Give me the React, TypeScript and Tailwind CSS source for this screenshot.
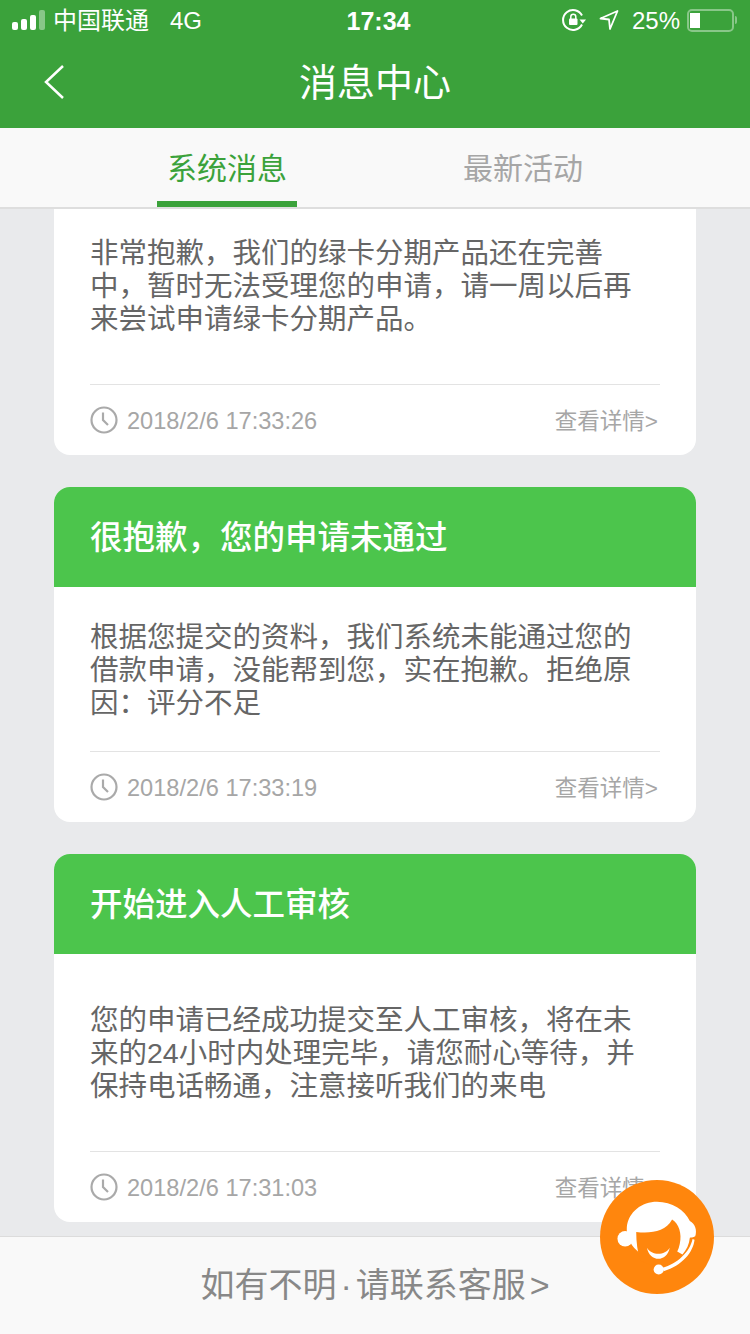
// App.tsx
function SignalBars() {
  return (
    <div className="flex items-end gap-[3px]">
      <span className="h-[8px] w-[6px] rounded-[2px] bg-white" />
      <span className="h-[11px] w-[6px] rounded-[2px] bg-white" />
      <span className="h-[15px] w-[6px] rounded-[2px] bg-white" />
      <span className="h-[20px] w-[6px] rounded-[2px] bg-white/40" />
    </div>
  );
}

function StatusBar() {
  return (
    <div className="flex h-[40px] items-center pl-[12px] pr-[13px] text-white">
      <SignalBars />
      <span className="ml-[8px] mt-[2px] text-[24px] leading-none">中国联通</span>
      <span className="ml-[21px] mt-[2px] text-[24px] leading-none">4G</span>
      <span className="absolute left-0 right-0 mt-[2px] pl-[7px] text-center text-[25px] font-semibold leading-none">17:34</span>
      <div className="ml-auto flex items-center">
        <svg width="24" height="24" viewBox="0 0 24 24" fill="none" stroke="white" strokeWidth="2">
          <path d="M20 7.500A10 10 0 1 0 20 16.500" />
          <path d="M17.500 11.500h6.500l-3.200 4z" fill="white" stroke="none" />
          <rect x="7" y="10.500" width="8.500" height="6.500" rx="1" fill="white" stroke="none" />
          <path d="M8.800 11V8.800a2.500 2.500 0 0 1 5 0V11" strokeWidth="1.500" />
        </svg>
        <svg className="ml-[13px]" width="20" height="22" viewBox="0 0 20 22" fill="none" stroke="white" strokeWidth="1.800" strokeLinejoin="round">
          <path d="M1.500 9.500 18.500 2 11 20 10 10.500z" />
        </svg>
        <span className="ml-[13px] mt-[2px] text-[24px] leading-none">25%</span>
        <div className="ml-[7px] flex h-[23px] w-[47px] items-center rounded-[5px] border-2 border-white/40 p-[1px]">
          <span className="h-[15px] w-[10px] bg-white" />
        </div>
        <span className="ml-[1px] h-[8px] w-[2px] rounded-r-full bg-white/40" />
      </div>
    </div>
  );
}

function ClockIcon() {
  return (
    <svg width="28" height="28" viewBox="0 0 28 28" fill="none" stroke="#aaaaaa" strokeWidth="2.200">
      <circle cx="14" cy="14" r="12.500" />
      <path d="M13 6.500V14l5 5" />
    </svg>
  );
}

function AgentIcon() {
  return (
    <svg className="h-full w-full" viewBox="0 0 340 340">
      <circle cx="170" cy="170" r="170" fill="#ff860d" />
      <circle cx="75" cy="175" r="23" fill="white" />
      <path d="M110 210C88 190 78 165 80 140C85 95 125 65 170 65C215 65 252 90 268 122C284 130 290 150 284 168C278 172 270 172 268 172C266 192 258 208 246 222L225 210L130 230Z" fill="white" />
      <path d="M108 155C150 160 195 155 215 118C235 130 245 160 238 190C232 225 205 250 170 262L120 240C112 215 108 185 108 155Z" fill="#ff860d" />
      <path d="M140 202C155 226 193 226 208 202C200 246 148 246 140 202Z" fill="white" />
      <path d="M282 178C278 215 245 255 190 272L186 262C230 250 268 215 276 176Z" fill="white" />
      <circle cx="175" cy="267" r="15" fill="white" />
    </svg>
  );
}

type Msg = {
  title?: string;
  lines: string[];
  time: string;
  textClass: string;
};

const messages: Msg[] = [
  {
    lines: ["非常抱歉，我们的绿卡分期产品还在完善", "中，暂时无法受理您的申请，请一周以后再", "来尝试申请绿卡分期产品。"],
    time: "2018/2/6 17:33:26",
    textClass: "pt-[28px] pb-[48px]",
  },
  {
    title: "很抱歉，您的申请未通过",
    lines: ["根据您提交的资料，我们系统未能通过您的", "借款申请，没能帮到您，实在抱歉。拒绝原", "因：评分不足"],
    time: "2018/2/6 17:33:19",
    textClass: "pt-[34px] pb-[31px]",
  },
  {
    title: "开始进入人工审核",
    lines: ["您的申请已经成功提交至人工审核，将在未", "来的24小时内处理完毕，请您耐心等待，并", "保持电话畅通，注意接听我们的来电"],
    time: "2018/2/6 17:31:03",
    textClass: "pt-[50px] pb-[48px]",
  },
];

function MessageCard({ msg }: { msg: Msg }) {
  return (
    <div className={msg.title ? "shrink-0 overflow-hidden rounded-[16px] bg-white" : "shrink-0 overflow-hidden rounded-b-[16px] bg-white"}>
      {msg.title && (
        <div className="flex h-[100px] items-center bg-[#4cc54c] px-[36px] pt-[2px] text-[32.500px] font-medium text-white">{msg.title}</div>
      )}
      <div className="px-[36px]">
        <div className={`whitespace-nowrap border-b border-[#e3e3e3] text-[28.500px] leading-[33px] text-[#666666] ${msg.textClass}`}>
          {msg.lines.map((line) => (
            <div key={line}>{line}</div>
          ))}
        </div>
        <div className="flex h-[70px] items-center text-[#a6a6a6]">
          <ClockIcon />
          <span className="ml-[9px] mt-[4px] text-[23.600px] leading-none">{msg.time}</span>
          <span className="ml-auto mt-[4px] pr-[2px] text-[22.500px] leading-none">查看详情&gt;</span>
        </div>
      </div>
    </div>
  );
}

export default function App() {
  return (
    <div className="relative flex h-[1334px] w-[750px] flex-col overflow-hidden bg-[#e9eaec] font-['Liberation_Sans','Noto_Sans_CJK_SC',sans-serif]">
      <header className="h-[128px] bg-[#3ba23b] text-white">
        <StatusBar />
        <div className="relative flex h-[88px] items-center justify-center pb-[2px]">
          <svg className="absolute left-[44px] top-[24px]" width="20" height="36" viewBox="0 0 20 36" fill="none" stroke="white" strokeWidth="2.500">
            <path d="M19 2 2 18l17 16" />
          </svg>
          <span className="text-[38px] leading-none">消息中心</span>
        </div>
      </header>

      <nav className="flex h-[81px] gap-[156px] border-b-2 border-[#dedede] bg-[#f9f9f9] pl-[157px]">
        <div className="flex w-[140px] items-center justify-center border-b-[6px] border-[#3ba23b] pt-[8px] text-[30px] leading-none text-[#3ba23b]">
          系统消息
        </div>
        <div className="flex w-[140px] items-center justify-center pt-[2px] text-[30px] leading-none text-[#a6a6a6]">
          最新活动
        </div>
      </nav>

      <main className="flex min-h-0 flex-1 flex-col justify-end gap-[32px] overflow-hidden px-[54px] pb-[14px]">
        {messages.map((m) => (
          <MessageCard key={m.time} msg={m} />
        ))}
      </main>

      <footer className="flex h-[98px] items-center justify-center border-t border-[#dcdcdc] bg-[#f9f9f9] pb-[1px] text-[34px] leading-none text-[#888888]">
        如有不明<span className="mx-[4px]">·</span>请联系客服<span className="ml-[4px]">&gt;</span>
      </footer>

      <div className="absolute left-[600px] top-[1180px] h-[114px] w-[114px]">
        <AgentIcon />
      </div>
    </div>
  );
}
